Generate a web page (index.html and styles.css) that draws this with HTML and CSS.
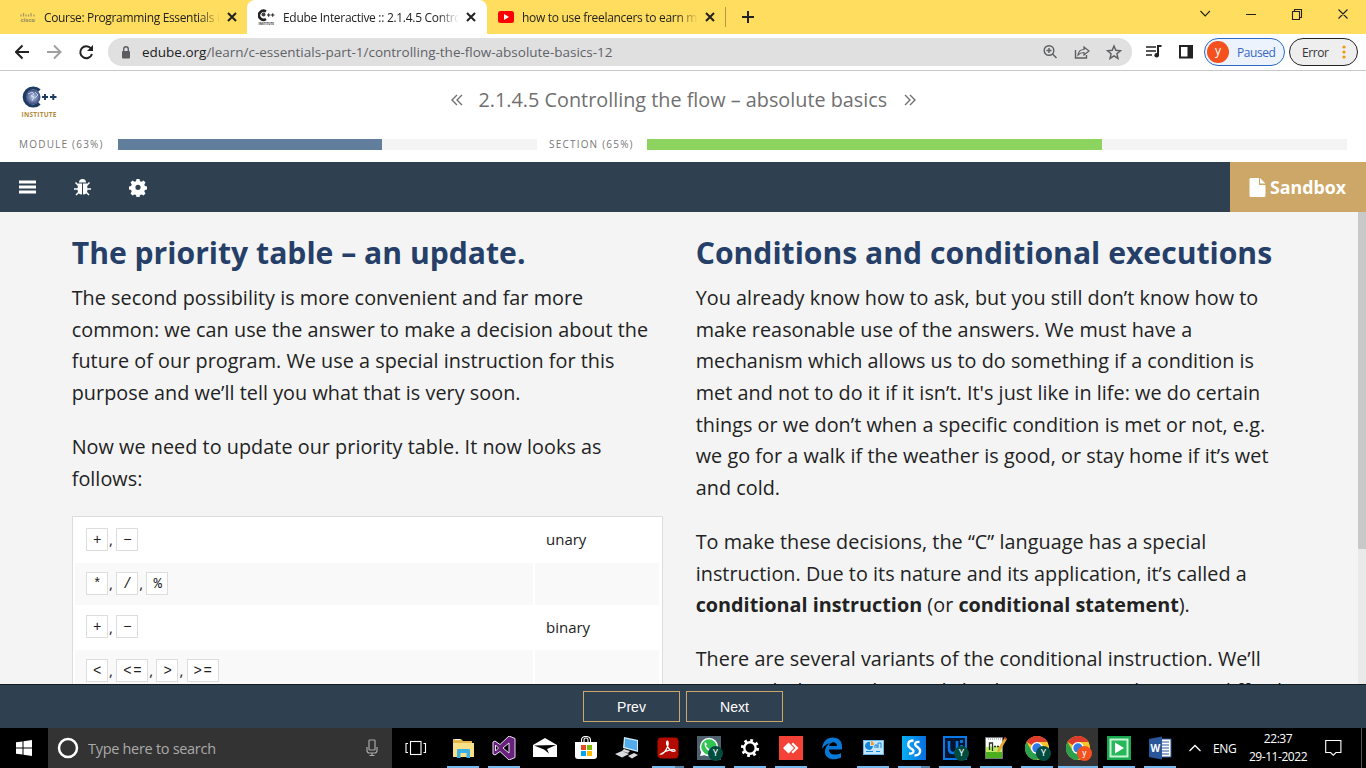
FILE: index.html
```html
<!DOCTYPE html>
<html lang="en">
<head>
<meta charset="utf-8">
<title>Edube Interactive :: 2.1.4.5 Controlling the flow</title>
<link rel="stylesheet" href="styles.css">
</head>
<body>
<svg width="0" height="0" class="defs"><defs>
<symbol id="close" viewBox="0 0 10 10"><path d="M1 1l8 8M9 1L1 9" stroke="#222" stroke-width="2"/></symbol>
<symbol id="chrome" viewBox="0 0 24 24"><circle cx="12" cy="12" r="12" fill="#f9c52b"/><path d="M12 12L1.600 6A12 12 0 0 1 22.400 6H12z" fill="#db3a2c"/><path d="M1.600 6A12 12 0 0 0 12 24l5.200-9L12 12 6.800 15z" fill="#2da04e"/><circle cx="12" cy="12" r="6" fill="#fff"/><circle cx="12" cy="12" r="4.700" fill="#3178e8"/></symbol>
</defs></svg>
<div class="screen">
<div class="tabs">
  <div class="tab tab-1">
    <svg width="16" height="10" viewBox="0 0 16 10"><path d="M1 2.500v2M3.500 1v3.500M6 2.500v2M8.500 2.500v2M11 1v3.500M14 2.500v2" stroke="#a99a60" stroke-width="1.300"/><text x="0.500" y="9.500" textLength="14.500" class="cisco">cisco</text></svg>
    <span class="title t1">Course: Programming Essentials i</span><svg class="x" width="10" height="10"><use href="#close"/></svg>
  </div>
  <div class="tab active">
    <svg width="17" height="18" viewBox="0 0 17 18"><path d="M8 3.500A4.500 4.500 0 1 0 8 11" fill="none" stroke="#222" stroke-width="2.600"/><circle cx="5.500" cy="6.500" r="2" fill="#444"/><path d="M9 7h3.500M10.700 5.300v3.500M13 7h3.500M14.700 5.300v3.500" stroke="#222"/><text x=".5" y="17.200" textLength="15.500" lengthAdjust="spacingAndGlyphs" class="mini">INSTITUTE</text></svg>
    <span class="title t2">Edube Interactive :: 2.1.4.5 Contro</span><svg class="x" width="10" height="10"><use href="#close"/></svg>
  </div>
  <div class="tab tab-3">
    <svg width="16" height="12" viewBox="0 0 16 12"><rect width="16" height="12" rx="2.500" fill="#f00"/><path d="M6 3l5 3-5 3z" fill="#fff"/></svg>
    <span class="title t3">how to use freelancers to earn mo</span><svg class="x" width="10" height="10"><use href="#close"/></svg>
  </div>
  <div class="divider"></div>
  <svg class="plus" width="12" height="12"><path d="M6 0v12M0 6h12" stroke="#222" stroke-width="2"/></svg>
  <svg class="window" width="150" height="16" viewBox="0 0 150 16" fill="none" stroke="#222" stroke-width="1.100"><path d="M.5 5l4.700 5 4.700-5M46 8.500h10M92.500 5.500h7v8h-7zM94.500 5.500v-2h7v8h-2M138.500 3.500l9 9M147.500 3.500l-9 9"/></svg>
</div>
<div class="browserbar">
  <svg class="navicons" width="94" height="20" viewBox="0 0 94 20" fill="none" stroke-width="2"><path d="M14 10H1.500M7.500 3.500L1 10l6.500 6.500" stroke="#222"/><path d="M32 10h13M39 3.500l6.500 6.500-6.500 6.500" stroke="#a0a0a0"/><path d="M76 6.500A6 6 0 1 0 77 12" stroke="#222"/><path d="M78 3v6h-6z" fill="#222"/></svg>
  <div class="address">
    <svg width="10" height="13" viewBox="0 0 10 13"><rect x="1" y="5" width="8" height="7.500" rx="1" fill="#5c5d60"/><path d="M2.700 5V3a2.300 2.300 0 0 1 4.600 0v2" fill="none" stroke="#5c5d60" stroke-width="1.400"/></svg>
    <span class="url"><b>edube.org</b>/learn/c-essentials-part-1/controlling-the-flow-absolute-basics-12</span>
    <svg class="addricons" width="80" height="18" viewBox="0 0 80 18" fill="none" stroke="#5c5d60" stroke-width="1.400"><circle cx="6" cy="7.500" r="4.800"/><path d="M9.500 11l4 4M3.500 7.500h5M6 5v5"/><path d="M32.500 7v8h11v-3"/><path d="M35 12c.5-4 3-5.500 6-5.500V4l5 4-5 4V9.500c-3 0-4.500.8-6 2.500z" stroke-width="1.200"/><path d="M71 3l1.800 4.300 4.700.4-3.600 3.100 1.100 4.600-4-2.500-4 2.500 1.100-4.600-3.600-3.100 4.700-.4z"/></svg>
  </div>
  <svg class="ext" width="50" height="18" viewBox="0 0 50 18"><path d="M0 4h10M0 8h10M0 12h6" stroke="#222" stroke-width="1.700"/><path d="M15.500 3H12v9" fill="none" stroke="#222" stroke-width="2"/><circle cx="10.700" cy="12.300" r="2.300" fill="#222"/><path d="M34 3h12v11.500H34z" fill="none" stroke="#222" stroke-width="2"/><path d="M41.500 3H47v11h-5.500z" fill="#222"/></svg>
  <div class="pill paused"><i>y</i><span>Paused</span></div>
  <div class="pill error"><span>Error</span><svg width="4" height="14"><g fill="#f29900"><circle cx="2" cy="2" r="1.600"/><circle cx="2" cy="7" r="1.600"/><circle cx="2" cy="12" r="1.600"/></g></svg></div>
</div>
<header class="course">
  <div class="course-top">
    <svg class="logo" width="38" height="34" viewBox="0 0 38 34"><defs><radialGradient id="globe"><stop stop-color="#bad0e8"/><stop offset="1" stop-color="#39477f"/></radialGradient></defs><circle cx="12" cy="11" r="7.500" fill="url(#globe)"/><path d="M7 8l4-2 2 2-3 2 3 1-2 4M14 6l3 3-3 3" fill="none" stroke="#dbe5f5" stroke-width=".8"/><path d="M18.500 4.500A9 9 0 1 0 18.500 17.500" fill="none" stroke="#1d3b62" stroke-width="3.200"/><path d="M21 11h6M24 8v6M29 11h6.500M32.300 8v6" stroke="#1d3b62" stroke-width="1.900"/><text x="0.500" y="30.500" textLength="35" class="institute">INSTITUTE</text></svg>
    <div class="lesson"><svg width="12" height="12"><path d="M6 1L1 6l5 5M11 1L6 6l5 5" fill="none" stroke="#707070" stroke-width="1.400"/></svg><h1>2.1.4.5 Controlling the flow – absolute basics</h1><svg width="12" height="12"><path d="M1 1l5 5-5 5M6 1l5 5-5 5" fill="none" stroke="#707070" stroke-width="1.400"/></svg></div>
  </div>
  <div class="progress"><span class="pl pm">MODULE (63%)</span><div class="track module"><div style="width:63%"></div></div><span class="pl ps">SECTION (65%)</span><div class="track section"><div style="width:65%"></div></div></div>
</header>
<nav class="tools">
  <svg class="toolicons" width="132" height="20" viewBox="0 0 132 20" fill="#fff"><path d="M0 3.500h17v3H0zM0 8.500h17v3H0zM0 13.500h17v3H0z"/><path d="M60 5.500a3.500 3.500 0 0 1 7 0z"/><path d="M59 6.500h4v11c-3 0-4.500-2-4.500-5zM64 6.500h4l.5 6c0 3-1.500 5-4.500 5z"/><path d="M59.500 8.500l-3-3M59 12h-4M60 15l-3 3M67.500 8.500l3-3M68 12h4M67 15l3 3" stroke="#fff" stroke-width="1.500"/><path fill-rule="evenodd" d="M117.500 2h3l.5 2.200 1.500.6 2-1.200 2 2-1.200 2 .6 1.500 2.100.5v3l-2.100.5-.6 1.500 1.200 2-2 2-2-1.200-1.500.6-.5 2h-3l-.5-2-1.500-.6-2 1.200-2-2 1.200-2-.6-1.500-2.100-.5v-3l2.100-.5.6-1.500-1.200-2 2-2 2 1.200 1.500-.6zm1.500 5.700a2.600 2.600 0 1 0 0 5.200 2.600 2.600 0 0 0 0-5.200z"/></svg>
  <div class="sandbox"><svg width="17" height="19" viewBox="0 0 17 19"><path d="M1.500 0H10v7h6.500v10.500q0 1.500-1.500 1.500H2Q.5 19 .5 17.500V1.500Q.5 0 1.500 0zM11 0l5.500 5.500H11z" fill="#fff"/></svg><span>Sandbox</span></div>
</nav>
<main class="content">
  <section class="left">
    <h2>The priority table – an update.</h2>
    <p>The second possibility is more convenient and far more<br>common: we can use the answer to make a decision about the<br>future of our program. We use a special instruction for this<br>purpose and we’ll tell you what that is very soon.</p>
    <p>Now we need to update our priority table. It now looks as<br>follows:</p>
    <div class="table">
      <div class="cell"><code>+</code>,<code>−</code></div><div class="cell">unary</div>
      <div class="cell alt"><code>*</code>,<code>/</code>,<code>%</code></div><div class="cell alt"></div>
      <div class="cell"><code>+</code>,<code>−</code></div><div class="cell">binary</div>
      <div class="cell alt"><code>&lt;</code>,<code>&lt;=</code>,<code>&gt;</code>,<code>&gt;=</code></div><div class="cell alt"></div>
    </div>
  </section>
  <section class="right">
    <h2>Conditions and conditional executions</h2>
    <p>You already know how to ask, but you still don’t know how to<br>make reasonable use of the answers. We must have a<br>mechanism which allows us to do something if a condition is<br>met and not to do it if it isn’t. It's just like in life: we do certain<br>things or we don’t when a specific condition is met or not, e.g.<br>we go for a walk if the weather is good, or stay home if it’s wet<br>and cold.</p>
    <p>To make these decisions, the “C” language has a special<br>instruction. Due to its nature and its application, it’s called a<br><b>conditional instruction</b> (or <b>conditional statement</b>).</p>
    <p>There are several variants of the conditional instruction. We’ll<br><span class="last">start with the simplest and slowly move on to the more difficult</span></p>
  </section>
  <div class="scroll"><div class="thumb"></div></div>
</main>
<footer class="pager"><button>Prev</button><button>Next</button></footer>
<div class="taskbar">
  <div class="start"><svg width="16" height="16"><path d="M0 2.300L6.500 1.400V7.500H0zM7.500 1.200L16 0v7.500H7.500zM0 8.500h6.500v6.100L0 13.700zM7.500 8.500H16V16l-8.500-1.200z" fill="#fff"/></svg></div>
  <div class="search"><svg width="22" height="22"><circle cx="11" cy="11" r="9" fill="none" stroke="#fff" stroke-width="2.500"/></svg><span>Type here to search</span><svg class="mic" width="12" height="18" viewBox="0 0 12 18" fill="none" stroke="#aaa" stroke-width="1.200"><rect x="3" y="1" width="6" height="10" rx=".7"/><path d="M1 8v3.500Q1 14 3.500 14h5q2.500 0 2.500-2.500V8M6 14v2.500M3.500 16.500h5"/></svg></div>
  <div class="app view"><svg width="22" height="16" fill="none" stroke="#fff" stroke-width="1.100"><rect x="5.500" y="1.500" width="10.500" height="13"/><path d="M3 3.500H1v9h2M18.500 3.500h2v9h-2"/></svg></div>
  <div class="app on"><svg width="24" height="24" viewBox="0 0 24 24"><path d="M2 3h8l2 2h9v16H2z" fill="#e5b84b"/><path d="M2 7h21v14H2z" fill="#fbe08a"/><path d="M4 3h5v1H4z" fill="#fff"/><path d="M6 22v-8q0-1 1-1h11q1 0 1 1v8h-3.500v-5h-6v5z" fill="#3ab1e4"/></svg></div>
  <div class="app on"><svg width="24" height="24"><path d="M17 0l6 2.500v19L17 24 8 15.500l-5 3.500-2-1V6l2-1 5 3.500zM17 7l-6 5 6 5zM3.500 9v6L6.500 12z" fill="#68217a" fill-rule="evenodd" stroke="#e8dff0" stroke-width="1"/></svg></div>
  <div class="app"><svg width="24" height="24"><path d="M0 9l12-7 12 7v12H0z" fill="#fff"/><path d="M1 9.500l22-.5-9 4 2 4.500-5-4z" fill="#000"/></svg></div>
  <div class="app"><svg width="24" height="24"><path d="M7.500 7V4q0-3.500 4.500-3.500T16.500 4v3M10 6V4q0-2 2-2t2 2v2" fill="none" stroke="#fff" stroke-width="1.100"/><path d="M1 6h22v14q0 3-3 3H4q-3 0-3-3z" fill="#fff"/><path d="M7 9h5v5H7z" fill="#e64a25"/><path d="M13 9h5v5h-5z" fill="#7fba00"/><path d="M7 15h5v5H7z" fill="#00a4ef"/><path d="M13 15h5v5h-5z" fill="#ffb900"/></svg></div>
  <div class="app"><svg width="24" height="24"><path d="M9 1l14 3v12L8 12z" fill="#d4edfa"/><path d="M10 2.500l12 2.500v9.500L9.500 11z" fill="#52adea"/><path d="M9 13l6 2-2 2-6-2zM0 18l7-3 7 3-7 3.500zM13 20l6-3 4 2-6 3.500z" fill="#d9dde0"/></svg></div>
  <div class="app on split"><svg width="24" height="24"><rect x="1.500" y="1.500" width="21" height="21" rx="4" fill="#b30b00"/><path d="M5 18c3 0 8-7 7-12-1-2-2 0-1 3 2 5 5 7 8 6 1-3-9-1-14 3z" fill="none" stroke="#fff" stroke-width="1.300"/></svg></div>
  <div class="app on"><svg width="24" height="24"><path d="M0 0h24v24H0z" fill="#4d606c"/><circle cx="12" cy="11" r="8.500" fill="#30c452" stroke="#fff" stroke-width="1.500"/><path d="M3 20l2-6 4 5z" fill="#fff"/><path d="M8 6c-2 4 3 10 7 10l2-2-3-2-2 1-3-3 1-2z" fill="#fff"/></svg><i class="badge">Y</i></div>
  <div class="app on"><svg width="24" height="24"><circle cx="12" cy="12" r="5.700" fill="none" stroke="#fff" stroke-width="2.400"/><circle cx="12" cy="12" r="7.600" fill="none" stroke="#fff" stroke-width="3" stroke-dasharray="2.700 3.270"/></svg></div>
  <div class="app on"><svg width="24" height="24"><path d="M0 0h24v24H0z" fill="#f44336"/><path d="M9.500 6.500L15 12l-5.500 5.500L4 12zM14 6.500l5.500 5.500-5.500 5.500-1.500-1.500 4-4-4-4z" fill="#fff"/></svg></div>
  <div class="app"><svg width="24" height="24"><path d="M2 13C3 5 7 1.500 13 1.500c6 0 9 4 9 9v3H9c0 6 8 6 12 3.500v4.500c-8 4-17 1-16-7C5.500 11 7 9 10 7c-4 1-6 3-8 6zM9 10h8c0-5-7-5-8 0z" fill="#0878d7" fill-rule="evenodd"/></svg></div>
  <div class="app on"><svg width="24" height="24"><path d="M2 4h21v15H2z" fill="#63b6e8"/><path d="M3 5h19v13H3z" fill="#c4e5f8"/><path d="M12 10H9V6a4 4 0 1 0 3 4z" fill="#1684d8"/><path d="M10 5a4 4 0 0 1 3 4h-3z" fill="#f29a28"/><path d="M14 12V9h2v3M17 12V7h3v5M5 15.500h7M15 15.500h4" stroke="#1684d8" fill="none"/></svg></div>
  <div class="app on split"><svg width="24" height="24"><defs><linearGradient id="sb"><stop stop-color="#08aff3"/><stop offset="1" stop-color="#096ee0"/></linearGradient></defs><path d="M0 0h24v24H0z" fill="url(#sb)"/><path d="M11.500 4.500C5 4.500 5 10.500 9 12.500l1.500 1c2.500 2 0 4.500-3.500 4M17.500 6c-4-.5-5.500 1.500-3.500 4l2 1.500c4 3 2 8-3.500 8" fill="none" stroke="#fff" stroke-width="2.300"/></svg></div>
  <div class="app on"><svg width="24" height="24"><path d="M1 1h22v22H1z" fill="#06152d" stroke="#087ae8" stroke-width="2"/><path d="M6 5v7q0 5 4 5t4-5V5M18.500 9v9" fill="none" stroke="#087ae8" stroke-width="2.600"/><circle cx="18.500" cy="5.500" r="1.700" fill="#087ae8"/></svg><i class="badge">Y</i></div>
  <div class="app on"><svg width="24" height="24"><path d="M1.500 1.500h17v21h-17z" fill="#fff" stroke="#777"/><path d="M2 11l16-1v12H2z" fill="#bdec66"/><path d="M2 16h16v6H2z" fill="#4caf20"/><path d="M4 3h13" stroke="#789" stroke-dasharray="1 1"/><path d="M5.500 14V7h3v8M10 10.500h2M13 10.500h2" stroke="#232" fill="none" stroke-width="1.300"/><path d="M21 1l2 2-7 12-3 2 1-4z" fill="#e8a52e"/><path d="M21 1l2 2-1 1-2-2z" fill="#b43320"/></svg></div>
  <div class="app on"><svg width="24" height="24"><use href="#chrome"/></svg><i class="badge">Y</i></div>
  <div class="app on current"><svg width="24" height="24"><use href="#chrome"/></svg><i class="badge orange">y</i></div>
  <div class="app on"><svg width="24" height="24"><path d="M0 0h24v24H0z" fill="#18a84d"/><path d="M3.500 3.500h17v17h-17z" fill="#27b85b" stroke="#c7f5d4" stroke-width="2"/><path d="M8 6.500l9 5.500-9 5.500z" fill="#fff"/></svg></div>
  <div class="app on"><svg width="24" height="24"><path d="M12 3h11v18H12z" fill="#fff" stroke="#2b579a"/><path d="M14 6h7M14 9h7M14 12h7M14 15h7M14 18h7" stroke="#2b579a"/><path d="M1 3l13-2.500v23L1 21z" fill="#2b579a"/><text x="2.500" y="16" class="word">W</text></svg></div>
  <div class="tray"><svg width="12" height="8"><path d="M.5 7L6 1.500 11.500 7" fill="none" stroke="#fff" stroke-width="1.300"/></svg><span class="lang">ENG</span><span class="clock"><span class="time">22:37</span><br>29-11-2022</span><svg class="note" width="17" height="18"><path d="M.7 1.500h15.200v12H11l-2.700 2.700L5.600 13.500H.7z" fill="none" stroke="#fff" stroke-width="1.100"/></svg><div class="peek"></div></div>
</div>
</div>
</body>
</html>
```
FILE: styles.css
```css
*{box-sizing:border-box}
body{margin:0;font-family:"Open Sans",sans-serif;overflow:hidden}
svg{flex:none;display:block}
.defs{position:absolute}
.screen{width:1366px;height:768px;display:flex;flex-direction:column;background:#fff}
.tabs{height:34px;flex:none;background:#ffdd5e;display:flex;align-items:center}
.tab{height:34px;display:flex;align-items:center;font-size:12px;color:#222}
.tab-1{width:247px;padding-left:20px}
.tab.active{width:240px;background:#fff;border-radius:8px 8px 0 0;padding-left:11px}
.tab-3{width:238px;padding-left:11px}
.title{white-space:nowrap;overflow:hidden;width:176px;margin-left:8px;-webkit-mask-image:linear-gradient(90deg,#000 88%,transparent);mask-image:linear-gradient(90deg,#000 88%,transparent)}
.t1{letter-spacing:-.34px}
.t2{letter-spacing:-.3px}
.t3{letter-spacing:-.3px}
.x{margin-left:7px}
.cisco{font:bold 6px "Open Sans",sans-serif;fill:#958b60}
.mini{font:bold 4px "Open Sans",sans-serif;fill:#333}
.institute{font:bold 6.500px "Open Sans",sans-serif;fill:#b18a3a}
.divider{width:1px;height:20px;background:#b39b42}
.plus{margin-left:16px}
.window{margin-left:446px;margin-top:-6px}
.browserbar{height:37px;flex:none;border-bottom:1px solid #c8c8c8;display:flex;align-items:center;padding-left:15px}
.navicons{margin-right:-1px}
.address{width:1024px;height:28px;border-radius:14px;background:#e0e0e0;display:flex;align-items:center;padding-left:13px}
.url{font-size:13.500px;color:#5f6368;margin-left:11px;width:891px;white-space:nowrap;letter-spacing:-.01px}
.url b{font-weight:400;color:#202124}
.addricons{margin-left:10px}
.ext{margin-left:14px;margin-right:8px}
.pill{height:28px;border-radius:14px;border:1px solid #2a69c8;background:#edf3fc;display:flex;align-items:center;font-size:12px;color:#3668c9}
.paused{width:81px;padding-left:2px}
.pill i{width:22px;height:22px;border-radius:50%;background:#f4511e;color:#fff;font-style:normal;text-align:center;line-height:20px}
.pill span{letter-spacing:-.45px}
.paused span{margin-left:8px}
.error{width:69px;margin-left:4px;background:#eee;border-color:#222;color:#333;padding-left:12px}
.error svg{margin-left:14px}
.course{height:91px;flex:none}
.course-top{height:61px;display:flex;align-items:center;padding-left:21px}
.logo{margin-top:2px}
.lesson{display:flex;align-items:center;margin-left:392px;height:32px;color:#707070;margin-top:-4px}
.lesson h1{font-size:19.800px;font-weight:400;margin:0 17px 0 15.500px;width:408.500px;white-space:nowrap;line-height:30px;letter-spacing:.01px}
.progress{height:24px;display:flex;align-items:center;padding-left:19px}
.pl{font-size:10px;letter-spacing:1.200px;color:#777;white-space:nowrap}
.pm{width:99px}
.ps{width:98px;margin-left:12px}
.track{height:11px;background:#f4f4f4}
.track div{height:11px;background:#617f9d}
.module{width:419px}
.section{width:700px}
.section div{background:#8cd35f}
.tools{height:50px;flex:none;background:#2f4050;display:flex;align-items:center;justify-content:space-between;padding-left:19px}
.sandbox{width:136px;height:50px;background:#cda767;color:#fff;display:flex;align-items:center;padding-left:19px;font-weight:700;font-size:17.800px}
.sandbox span{margin-left:4px}
.content{height:472px;flex:none;background:#f4f4f4;display:flex;overflow:hidden;padding-left:71.700px;color:#222}
.left{width:591px;margin-right:33px;flex:none}
.right{width:662.300px;flex:none}
h2{font-size:30.140px;line-height:40px;color:#253f68;margin:21px 0 9px;white-space:nowrap}
p{font-size:19.800px;line-height:31.680px;margin:0 0 22.300px;white-space:nowrap;letter-spacing:.04px}
p b{letter-spacing:0}
.left p:nth-of-type(2){margin-bottom:21.300px}
.last{letter-spacing:.2px}
.table{background:#fff;border:1px solid #ddd;height:184px;display:grid;grid-template-columns:458px 124px;grid-template-rows:42px 42px 41px 42px;gap:2px;padding:2px;font-size:15px;margin-left:.3px}
.cell{display:flex;align-items:center;padding-left:11px;padding-bottom:1px}
.alt{background:#f9f9f9}
code{font:14px "Liberation Mono",monospace;letter-spacing:1.600px;height:23px;border:1px solid #ddd;background:#fff;padding:3px 4px 3px 6px;margin-right:1px}
.cell code:not(:first-child){margin-left:3.300px}
.scroll{width:8px;background:#e9e9e9}
.thumb{height:337px;background:#c9c9c9}
.pager{height:44px;flex:none;border-top:1px solid #111b22;background:#2f4050;display:flex;justify-content:center;align-items:center;gap:6px}
.pager button{width:97px;height:31px;padding:0;background:transparent;border:1px solid #cda767;color:#fff;font:14px "Liberation Sans",sans-serif}
.taskbar{height:40px;flex:none;background:#000;display:flex;color:#fff}
.start{width:48px;display:flex;align-items:center;justify-content:center}
.search{width:344px;background:#333;display:flex;align-items:center;padding-left:9px;color:#aaa;font-size:14.500px}
.search span{margin-left:9px;letter-spacing:-.3px;width:265px}
.mic{margin-left:13px}
.app{width:40px;margin-right:1px;display:flex;align-items:center;justify-content:center;position:relative;flex:none}
.view{width:48px;margin-right:3px}
.on::after{content:"";position:absolute;left:4px;bottom:0;width:32px;height:2px;background:#76b9ed}
.split::after{background:linear-gradient(90deg,#76b9ed 23px,#5382a8 23px)}
.current{background:#333}
.current::after{left:0;width:40px}
.badge{position:absolute;left:19px;top:18px;width:15px;height:15px;border-radius:50%;background:#004d40;font:9px/15px Roboto,sans-serif;text-align:center;color:#fff}
.orange{background:#f4511e}
.word{font:bold 10px "Open Sans",sans-serif;fill:#fff}
.tray{display:flex;align-items:center;margin-left:8px;font-size:12px;flex:1}
.lang{margin-left:12px;width:32px;letter-spacing:-.4px}
.clock{text-align:center;line-height:18px;letter-spacing:-.45px;width:66px;white-space:nowrap}
.note{margin-left:14px}
.peek{width:1px;height:40px;background:#555;margin-left:19px}
```
